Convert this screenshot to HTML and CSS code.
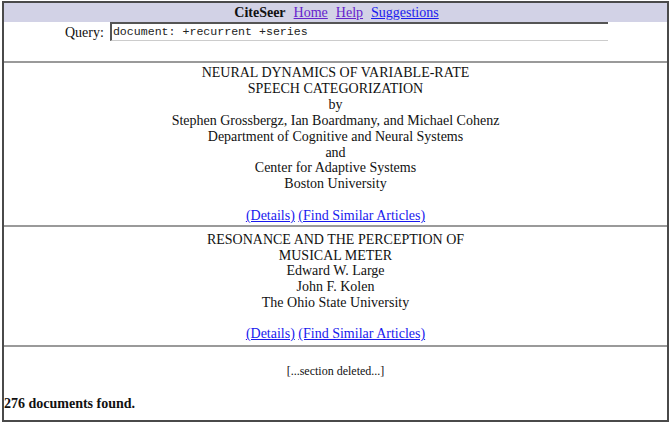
FILE: index.html
```html
<!DOCTYPE html>
<html>
<head>
<meta charset="utf-8">
<link rel="stylesheet" href="styles.css">
</head>
<body>
<div class="page">
  <div class="topbar">
    <b class="brand">CiteSeer</b>
    <a class="visited" href="#">Home</a>
    <a class="visited" href="#">Help</a>
    <a href="#">Suggestions</a>
  </div>
  <div class="query">
    <span class="qlabel">Query:</span>
    <div class="qinput">document: +recurrent +series</div>
  </div>
  <div class="result first">
    <div>NEURAL DYNAMICS OF VARIABLE-RATE</div>
    <div>SPEECH CATEGORIZATION</div>
    <div>by</div>
    <div>Stephen Grossbergz, Ian Boardmany, and Michael Cohenz</div>
    <div>Department of Cognitive and Neural Systems</div>
    <div>and</div>
    <div>Center for Adaptive Systems</div>
    <div>Boston University</div>
    <div class="blank"></div>
    <div><a href="#">(Details)</a> <a href="#">(Find Similar Articles)</a></div>
  </div>
  <div class="result second">
    <div>RESONANCE AND THE PERCEPTION OF</div>
    <div>MUSICAL METER</div>
    <div>Edward W. Large</div>
    <div>John F. Kolen</div>
    <div>The Ohio State University</div>
    <div class="blank"></div>
    <div><a href="#">(Details)</a> <a href="#">(Find Similar Articles)</a></div>
  </div>
  <div class="footer">
    <div class="deleted">[...section deleted...]</div>
    <div class="count">276 documents found.</div>
  </div>
</div>
</body>
</html>
```
FILE: styles.css
```css
* { box-sizing: border-box; }
html, body { margin: 0; padding: 0; background: #fff; }
body {
  font-family: "Liberation Serif", "Times New Roman", serif;
  font-size: 14px;
  color: #111;
}
a { color: #1a1aee; text-decoration: underline; }
a.visited { color: #6622cc; }

.page {
  margin: 1px 0 0 2px;
  width: 667px;
  height: 421px;
  border: 2px solid #4a4a4a;
  display: flex;
  flex-direction: column;
}
.topbar {
  height: 19px;
  background: #d2d2e6;
  display: flex;
  justify-content: center;
  align-items: center;
  gap: 8px;
  line-height: 16px;
  padding-left: 2px;
}
.brand { color: #111; }
.query {
  height: 39px;
  display: flex;
  align-items: flex-start;
  padding-left: 61px;
}
.qlabel {
  line-height: 18px;
  margin-top: 2px;
  margin-right: 6px;
}
.qinput {
  width: 498px;
  height: 19px;
  border-top: 2px solid #555;
  border-left: 2px solid #555;
  border-bottom: 1px solid #ccc;
  border-right: 0;
  font-family: "Liberation Mono", "Courier New", monospace;
  font-size: 11.6px;
  line-height: 15px;
  padding-left: 1px;
  color: #222;
}
.result {
  border-top: 2px solid #9a9a9a;
  text-align: center;
  line-height: 15.9px;
}
.result.first { padding-top: 2px; height: 164px; }
.result.second { padding-top: 5px; height: 120px; line-height: 15.7px; }
.blank { height: 15.8px; }
.footer {
  border-top: 2px solid #9a9a9a;
  flex: 1;
  display: flex;
  flex-direction: column;
}
.deleted {
  text-align: center;
  font-size: 12px;
  margin-top: 17px;
  line-height: 14px;
}
.count {
  font-weight: bold;
  margin-top: 18px;
  line-height: 16px;
  padding-left: 0;
}
```
